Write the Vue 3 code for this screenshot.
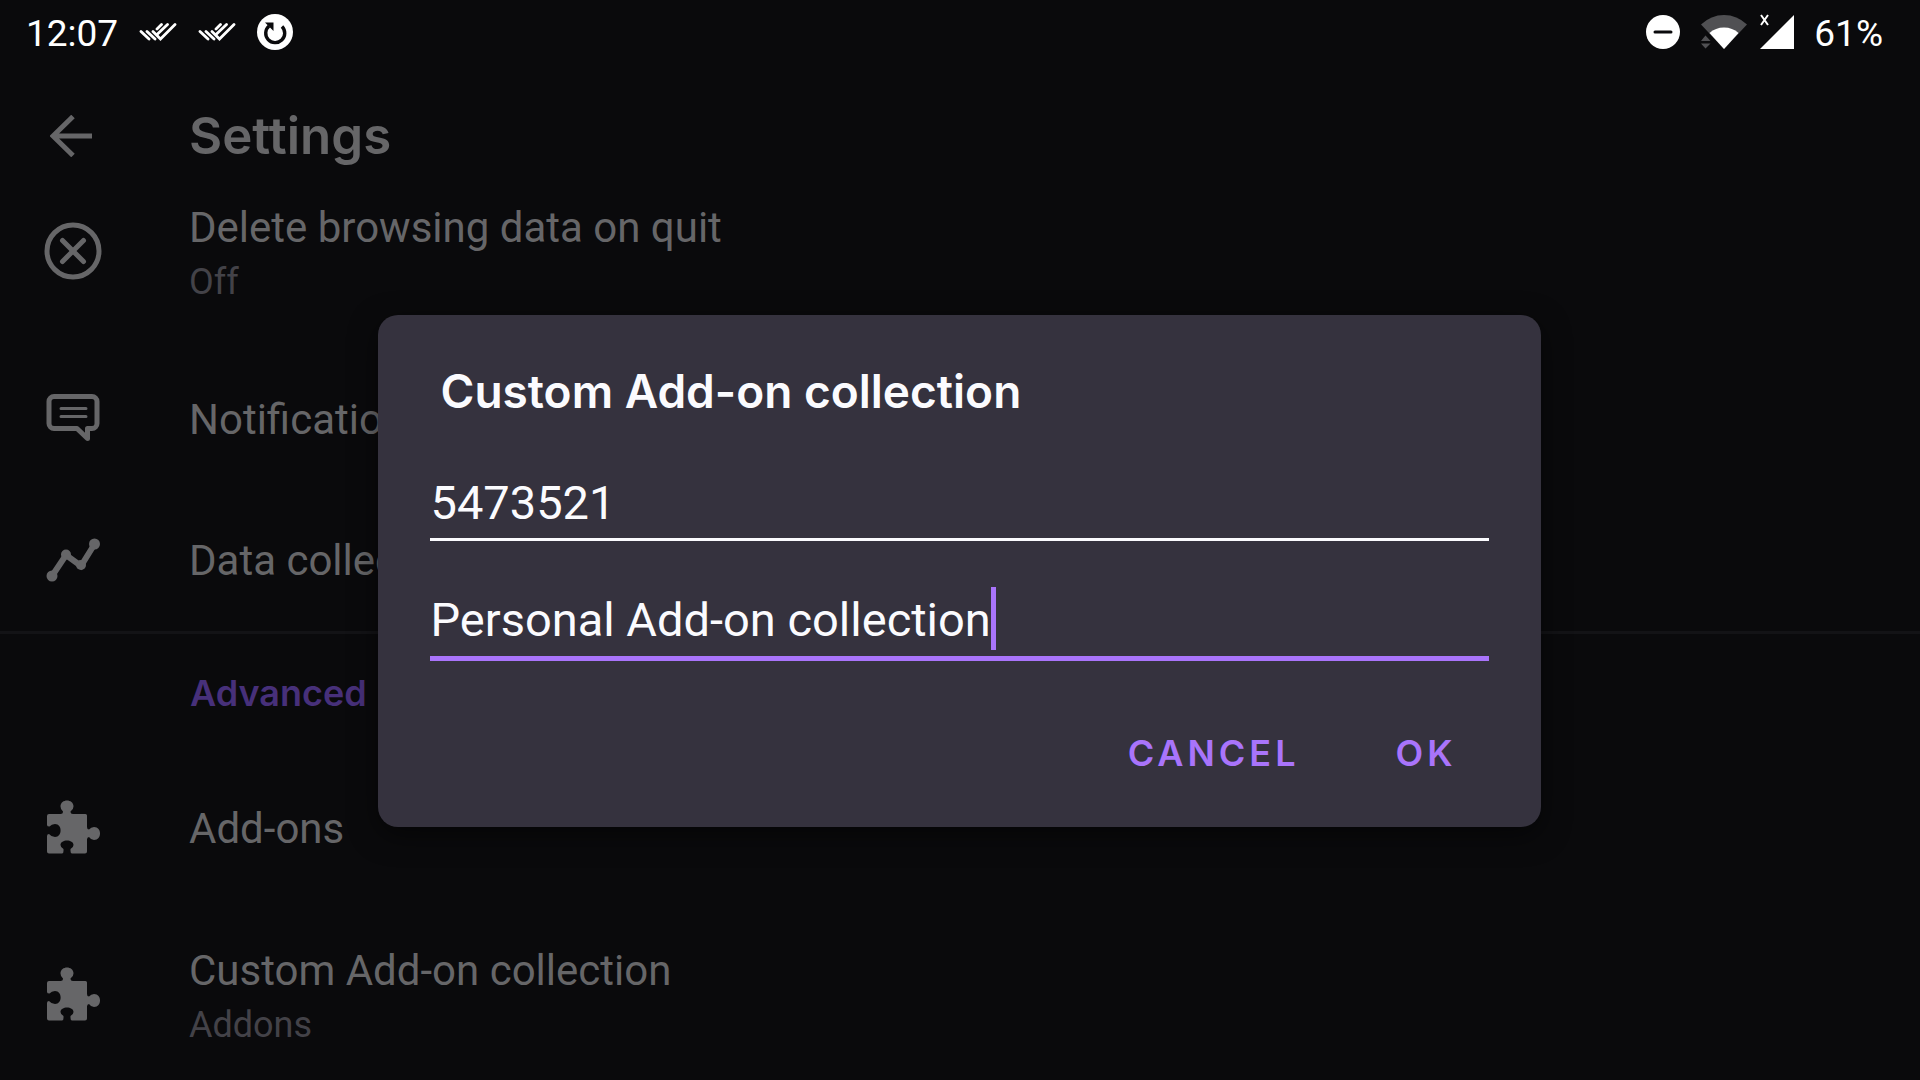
<script setup>
import { ref } from 'vue'

const owner = ref('5473521')
const collection = ref('Personal Add-on collection')

const privacyRows = [
  { icon: 'delete', title: 'Delete browsing data on quit', summary: 'Off' },
  { icon: 'notifications', title: 'Notifications' },
  { icon: 'data', title: 'Data collection' },
]
const advancedRows = [
  { icon: 'addon', title: 'Add-ons' },
  { icon: 'addon', title: 'Custom Add-on collection', summary: 'Addons' },
]
const groups = [
  { heading: '', rows: privacyRows },
  { heading: 'Advanced', rows: advancedRows },
]
</script>

<template>
  <div class="screen">
    <header class="status">
      <div class="status-side">
        <span class="status-text">12:07</span>
        <svg v-for="n in 2" :key="n" class="checks" viewBox="0 0 38 18" aria-hidden="true">
          <g fill="none" stroke="#fff" stroke-width="2.800" stroke-linecap="round">
            <path d="M2 8.500l8 7.500M8 8.500l8 7.500M14 8.500l7.500 7.500L36 1.500" />
            <path d="M18 11.500L28.500 1.500M18 6L22.500 1.500" />
          </g>
        </svg>
        <svg class="sync" viewBox="0 0 36 36" aria-hidden="true">
          <circle cx="18" cy="18" r="18" fill="#fff" />
          <path d="M25 12.500A9.500 9.500 0 1 1 12 12" fill="none" stroke="#0a0a0c" stroke-width="3.400" />
          <path d="M8 8.500h8.500v8.500z" fill="#0a0a0c" />
        </svg>
      </div>
      <div class="status-side">
        <svg class="dnd" viewBox="0 0 34 34" aria-hidden="true">
          <circle cx="17" cy="17" r="17" fill="#fff" />
          <path d="M9 17h16" stroke="#0a0a0c" stroke-width="3" stroke-linecap="round" />
        </svg>
        <svg class="wifi" viewBox="0 0 46 34" aria-hidden="true">
          <path d="M0 9.500Q10 0 23 0T46 9.500L23 34z" fill="#505053" />
          <path d="M8.500 18Q14.500 12.500 23 12.500T37.500 18L23 34z" fill="#fff" />
          <path d="M0 26L4.500 20.500 9.500 26zM0 28.500L4.500 33.500 9.500 28.500z" fill="#505053" stroke="#0a0a0c" />
          <path d="M0 26L4.500 20.500 9.500 26zM0 28.500L4.500 33.500 9.500 28.500z" fill="#505053" />
        </svg>
        <svg class="signal" viewBox="0 0 36 36" aria-hidden="true">
          <path d="M35 1v34H1z" fill="#fff" />
          <path d="M2 1l7 10M9 1L2 11" stroke="#fff" stroke-width="2" />
        </svg>
        <span class="status-text">61%</span>
      </div>
    </header>

    <div class="toolbar">
      <button class="back" type="button" aria-label="Back">
        <svg viewBox="0 0 42 42" aria-hidden="true">
          <path d="M42 21H3M23 1.500L3 21l20 19.500" fill="none" stroke="currentColor" stroke-width="5" />
        </svg>
      </button>
      <h1>Settings</h1>
    </div>

    <main>
      <section v-for="(group, g) in groups" :key="g" class="group">
        <h2 v-if="group.heading">{{ group.heading }}</h2>
        <a
          v-for="row in group.rows"
          :key="row.title"
          href="#"
          class="row"
          :class="{ tall: row.summary }"
        >
          <svg class="icon" viewBox="0 0 72 72" aria-hidden="true">
            <g v-if="row.icon === 'delete'" fill="none" stroke="currentColor" stroke-width="5">
              <circle cx="36" cy="36" r="26" />
              <path d="M25.500 25.500l21 21M46.500 25.500l-21 21" stroke-linecap="round" />
            </g>
            <g v-else-if="row.icon === 'notifications'" fill="none" stroke="currentColor">
              <path
                d="M17 14.500h38a5 5 0 0 1 5 5v22a5 5 0 0 1-5 5h-4.500v10L40 46.500H17a5 5 0 0 1-5-5v-22a5 5 0 0 1 5-5z"
                stroke-width="5"
                stroke-linejoin="round"
              />
              <path d="M24 26.500h25M24 34.500h25" stroke-width="3" stroke-linecap="round" />
            </g>
            <g v-else-if="row.icon === 'data'" fill="currentColor">
              <path d="M15 53l14-21 15 11 13-21" fill="none" stroke="currentColor" stroke-width="6" />
              <circle cx="15" cy="53" r="5.500" />
              <circle cx="29" cy="31.500" r="5" />
              <circle cx="44" cy="42" r="5" />
              <circle cx="57.500" cy="21" r="5.500" />
            </g>
            <path
              v-else
              fill="currentColor"
              d="M12 23h11.500Q26 23 26 20.500Q23.500 18.500 23.500 15.500C23.500 7.500 36.500 7.500 36.500 15.500Q36.500 18.500 33.500 20.500Q33.500 23 36 23H48.500Q50 23 50 24.500V36Q50 38.500 52 38.500Q54 36 57 36C65 36 65 49 57 49Q54 49 52 46Q50 46 50 48.500V60.500Q50 62.500 48 62.500H35Q33.500 62.500 33.500 60V58Q36.500 56.500 36.500 54C36.500 48 23.500 48 23.500 54Q23.500 56.500 26.500 58V60Q26.500 62.500 25 62.500H12Q10 62.500 10 60.500V45Q10 43 12 43Q14.500 46 18 46C25.500 46 25.500 33 18 33Q14.500 33 12.500 35.500Q10 35.500 10 34V25Q10 23 12 23z"
            />
          </svg>
          <span class="labels">
            <span class="title">{{ row.title }}</span>
            <span v-if="row.summary" class="summary">{{ row.summary }}</span>
          </span>
        </a>
      </section>
    </main>

    <div class="overlay">
      <form class="dialog" role="dialog" aria-labelledby="dialog-title" @submit.prevent>
        <h2 id="dialog-title">Custom Add-on collection</h2>
        <div class="field">
          <input v-model="owner" type="text" aria-label="Collection owner (user ID)" />
        </div>
        <div class="field active">
          <input v-model="collection" type="text" aria-label="Collection name" />
          <span class="caret"></span>
        </div>
        <div class="actions">
          <button type="button">CANCEL</button>
          <button type="submit">OK</button>
        </div>
      </form>
    </div>
  </div>
</template>

<style>
body {
  margin: 0;
  background: #0a0a0c;
}
</style>

<style scoped>
.screen {
  position: relative;
  height: 100vh;
  overflow: hidden;
  background: #0a0a0c;
  color: #666668;
  font-family: Roboto, sans-serif;
}

h1,
h2 {
  margin: 0;
  font-family: Inter, sans-serif;
  font-weight: 600;
}

svg {
  display: block;
  flex: none;
}

.status {
  display: flex;
  justify-content: space-between;
  height: 64px;
  padding: 0 37px 0 26px;
  color: #fff;
  font-size: 37px;
  line-height: 60px;
}

.status-side {
  display: flex;
  align-items: center;
}

.status-text {
  padding-top: 3px;
}

.checks {
  width: 38px;
  height: 18px;
  margin-left: 21px;
}

.sync {
  width: 36px;
  height: 36px;
  margin-left: 21px;
}

.dnd {
  width: 34px;
  height: 34px;
}

.wifi {
  width: 46px;
  height: 34px;
  margin: 0 12px 0 21px;
}

.signal {
  width: 36px;
  height: 36px;
  margin-right: 19px;
}

.toolbar {
  box-sizing: border-box;
  display: flex;
  align-items: center;
  height: 92px;
  padding: 52px 0 0 50px;
}

.toolbar h1 {
  padding-left: 97px;
  font-size: 51px;
  line-height: 60px;
}

.back {
  padding: 0;
  border: 0;
  background: none;
  color: inherit;
}

.back svg {
  width: 42px;
  height: 42px;
}

.group + .group {
  border-top: 3px solid #131316;
}

.group h2 {
  padding: 30px 0 36px 190px;
  color: #47307a;
  font-size: 36px;
  line-height: 58px;
}

.row {
  display: flex;
  align-items: center;
  height: 141px;
  padding-left: 37px;
  color: inherit;
  text-decoration: none;
}

.row.tall {
  height: 193px;
}

.icon {
  width: 72px;
  height: 72px;
  margin: 0 80px 3px 0;
}

.labels {
  display: flex;
  flex-direction: column;
}

.tall .labels {
  padding-top: 3px;
}

.title {
  font-size: 42px;
  line-height: 56px;
}

.summary {
  color: #434248;
  font-size: 36px;
  line-height: 52px;
}

.overlay {
  position: absolute;
  inset: 64px 0 0;
  display: flex;
  align-items: center;
  justify-content: center;
  padding: 0 2px 2px 0;
}

.dialog {
  box-sizing: border-box;
  width: calc(100% - 64px);
  max-width: 1163px;
  padding: 46px 52px 38px;
  border-radius: 20px;
  background: #35323e;
  box-shadow: 0 8px 28px rgba(0, 0, 0, 0.5);
  color: #fbfbfe;
}

.dialog h2 {
  padding-left: 11px;
  font-size: 46px;
  line-height: 60px;
}

.field {
  display: flex;
  align-items: center;
  height: 60px;
  margin-top: 51px;
  padding-bottom: 6px;
  border-bottom: 3px solid #fbfbfe;
}

.field.active {
  height: 65px;
  margin-top: 46px;
  padding-bottom: 4px;
  border-bottom: 5px solid #a974fb;
}

.field input {
  field-sizing: content;
  height: 63px;
  padding: 0 0 0 1px;
  border: 0;
  outline: 0;
  background: none;
  color: inherit;
  font: 47px/63px Roboto, sans-serif;
}

.caret {
  align-self: flex-start;
  width: 5px;
  height: 63px;
  background: #a974fb;
}

.actions {
  display: flex;
  justify-content: flex-end;
  gap: 32px;
  margin-top: 56px;
}

.actions button {
  padding: 0 32px;
  border: 0;
  background: none;
  color: #a974fb;
  font: 600 36px/72px Inter, sans-serif;
  letter-spacing: 4px;
}
</style>
